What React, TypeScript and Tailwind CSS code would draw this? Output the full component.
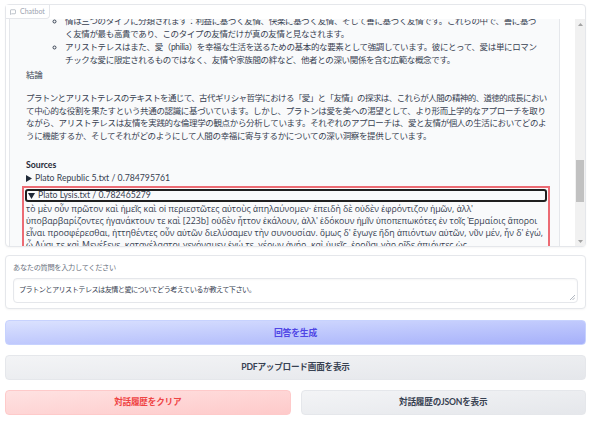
import React from "react";
import { MessageSquare } from "lucide-react";

const jp = "font-['Lato','Noto_Sans_CJK_JP',sans-serif]";
const greek = "font-['Open_Sans',sans-serif]";

function TriRight() {
  return (
    <svg width="6" height="7" viewBox="0 0 6 7" className="shrink-0">
      <path d="M0 0 L6 3.5 L0 7 Z" fill="#1f2937" />
    </svg>
  );
}

function TriDown() {
  return (
    <svg width="7" height="6" viewBox="0 0 7 6" className="shrink-0">
      <path d="M0 0 H7 L3.5 6 Z" fill="#1f2937" />
    </svg>
  );
}

function Scrollbar() {
  return (
    <div className="w-[10px] h-full bg-[#f1f1f1] flex flex-col items-center">
      <div className="h-[10px] flex items-center justify-center">
        <svg width="5" height="3" viewBox="0 0 5 3">
          <path d="M0 3 L2.5 0 L5 3 Z" fill="#a3a3a3" />
        </svg>
      </div>
      <div className="h-[131px]" />
      <div className="h-[42px] w-[8px] bg-[#c1c1c1]" />
      <div className="flex-1" />
      <div className="h-[10px] flex items-center justify-center">
        <svg width="5" height="3" viewBox="0 0 5 3">
          <path d="M0 0 L5 0 L2.5 3 Z" fill="#a3a3a3" />
        </svg>
      </div>
    </div>
  );
}

function Chatbot() {
  return (
    <div className="relative h-[243px] border border-[#e5e7eb] rounded-[4px] bg-white pt-[14px] shadow-[0_1px_2px_rgba(0,0,0,0.04)]">
      <div className="absolute left-0 top-0 z-10 flex items-center gap-[4px] h-[14px] px-[4px] bg-white border-r border-b border-[#e5e7eb] rounded-br-[4px] text-[7px] text-[#9ca3af] font-['Lato',sans-serif]">
        <MessageSquare className="w-[6px] h-[6px]" strokeWidth={2.5} />
        <span>Chatbot</span>
      </div>
      <div className="flex h-[227px]">
        <div className="flex-1 overflow-hidden pl-[3px]">
          <div className="w-[551px] h-[240px] bg-[#f9fafb] border-l border-r border-[#e5e7eb] pl-[16px] pr-[10px]">
            <div className={`-mt-[4px] text-[8.5px] leading-[12.5px] tracking-[-0.35px] text-[#374151] whitespace-nowrap ${jp}`}>
              <ul className="list-[circle] pl-[39px]">
                <li>
                  情は三つのタイプに分類されます：利益に基づく友情、快楽に基づく友情、そして善に基づく友情です。これらの中で、善に基づ
                  <br />
                  く友情が最も高貴であり、このタイプの友情だけが真の友情と見なされます。
                </li>
                <li className="mt-[1px]">
                  アリストテレスはまた、愛（philia）を幸福な生活を送るための基本的な要素として強調しています。彼にとって、愛は単にロマン
                  <br />
                  チックな愛に限定されるものではなく、友情や家族間の絆など、他者との深い関係を含む広範な概念です。
                </li>
              </ul>
              <p className="mt-[3px]">結論</p>
              <p className="mt-[10.5px]">
                <span className="tracking-[-0.6px]">
                  プラトンとアリストテレスのテキストを通じて、古代ギリシャ哲学における「愛」と「友情」の探求は、これらが人間の精神的、道徳的成長におい
                </span>
                <br />
                て中心的な役割を果たすという共通の認識に基づいています。しかし、プラトンは愛を美への渇望として、より形而上学的なアプローチを取り
                <br />
                ながら、アリストテレスは友情を実践的な倫理学の観点から分析しています。それぞれのアプローチは、愛と友情が個人の生活においてどのよ
                <br />
                うに機能するか、そしてそれがどのようにして人間の幸福に寄与するかについての深い洞察を提供しています。
              </p>
            </div>
            <div className="text-[8.7px] leading-[12.5px] text-[#374151] font-['Lato',sans-serif]">
              <p className="mt-[17px] font-bold text-[#1f2937]">Sources</p>
              <div className="mt-[0.5px] flex items-center gap-[3px]">
                <TriRight />
                <span>Plato Republic 5.txt / 0.784795761</span>
              </div>
              <div className="mt-[1.5px] -ml-[4px] w-[528px] border-2 border-[#ec6b74] pt-[1px] px-[1px]">
                <div className="flex items-center gap-[3px] h-[13px] border-2 border-[#1f1f1f] rounded-[3px] pl-[1px]">
                  <TriDown />
                  <span>Plato Lysis.txt / 0.782465279</span>
                </div>
                <div className={`pl-[1px] pt-[0.5px] text-[8.75px] leading-[12px] whitespace-nowrap ${greek}`}>
                  τὸ μὲν οὖν πρῶτον καὶ ἡμεῖς καὶ οἱ περιεστῶτες αὐτοὺς ἀπηλαύνομεν· ἐπειδὴ δὲ οὐδὲν ἐφρόντιζον ἡμῶν, ἀλλ'
                  <br />
                  ὑποβαρβαρίζοντες ἠγανάκτουν τε καὶ [223b] οὐδὲν ἧττον ἐκάλουν, ἀλλ' ἐδόκουν ἡμῖν ὑποπεπωκότες ἐν τοῖς Ἑρμαίοις ἄποροι
                  <br />
                  εἶναι προσφέρεσθαι, ἡττηθέντες οὖν αὐτῶν διελύσαμεν τὴν συνουσίαν. ὅμως δ' ἔγωγε ἤδη ἀπιόντων αὐτῶν, νῦν μέν, ἦν δ' ἐγώ,
                  <br />
                  ὦ Λύσι τε καὶ Μενέξενε, καταγέλαστοι γεγόναμεν ἐγώ τε, γέρων ἀνήρ, καὶ ὑμεῖς. ἐροῦσι γὰρ οἵδε ἀπιόντες ὡς
                </div>
              </div>
            </div>
          </div>
        </div>
        <Scrollbar />
      </div>
    </div>
  );
}

function QuestionBox() {
  return (
    <div className="mt-[8px] h-[54px] border border-[#e5e7eb] rounded-[4px] bg-white px-[7px] pt-[7px] shadow-[0_1px_2px_rgba(0,0,0,0.04)]">
      <div className={`text-[7.2px] leading-[10px] tracking-[-0.3px] text-[#6b7280] ${jp}`}>
        あなたの質問を入力してください
      </div>
      <div className="mt-[5px] h-[25px] border border-[#e5e7eb] rounded-[4px] bg-white pl-[5px] pt-[6px] flex justify-between shadow-[inset_0_1px_2px_rgba(0,0,0,0.04)]">
        <span className={`text-[7.2px] leading-[10px] tracking-[-0.6px] text-[#374151] ${jp}`}>
          プラトンとアリストテレスは友情と愛についてどう考えているか教えて下さい。
        </span>
        <svg width="6" height="6" viewBox="0 0 6 6" className="self-end mb-[2px] mr-[2px]">
          <path d="M6 1 L1 6 M6 3.5 L3.5 6" stroke="#9ca3af" strokeWidth="0.8" />
        </svg>
      </div>
    </div>
  );
}

export default function App() {
  return (
    <div className="bg-white w-[590px] h-[423px] overflow-hidden">
      <div className="ml-[5px] w-[581px] pt-[4px]">
        <Chatbot />
        <QuestionBox />
        <button className={`mt-[11px] w-full h-[25px] rounded-[4px] border border-[#c7d2fe] bg-linear-to-br from-[#dbe2fe] to-[#a6b0fa] text-[#4f46e5] font-bold text-[8.8px] tracking-[-0.2px] ${jp}`}>
          回答を生成
        </button>
        <button className={`mt-[10px] w-full h-[25px] rounded-[4px] border border-[#e5e7eb] bg-linear-to-br from-[#f3f4f6] to-[#e5e7eb] text-[#374151] font-bold text-[8.6px] tracking-[-0.2px] ${jp}`}>
          PDFアップロード画面を表示
        </button>
        <div className="mt-[10px] grid grid-cols-2 gap-[10px]">
          <button className={`h-[25px] rounded-[4px] border border-[#fecaca] bg-linear-to-br from-[#fee2e2] to-[#fecaca] text-[#ef4444] font-bold text-[8.6px] tracking-[-0.2px] ${jp}`}>
            対話履歴をクリア
          </button>
          <button className={`h-[25px] rounded-[4px] border border-[#e5e7eb] bg-linear-to-br from-[#f3f4f6] to-[#e5e7eb] text-[#374151] font-bold text-[8.6px] tracking-[-0.2px] ${jp}`}>
            対話履歴のJSONを表示
          </button>
        </div>
      </div>
    </div>
  );
}
